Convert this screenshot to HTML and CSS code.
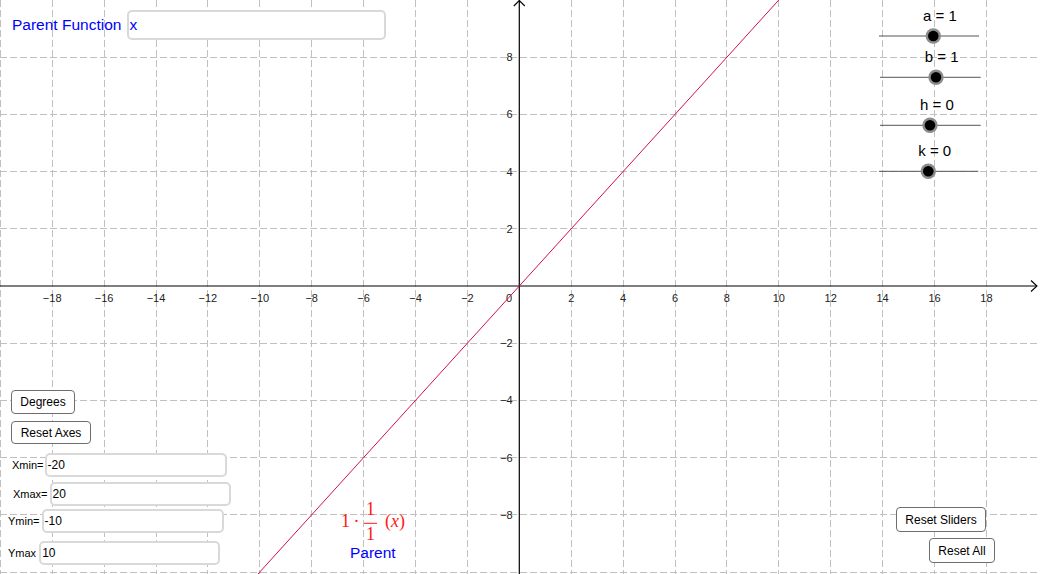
FILE: index.html
```html
<!DOCTYPE html>
<html>
<head>
<meta charset="utf-8">
<link rel="stylesheet" href="styles.css">
</head>
<body>
<div class="applet">
  <svg class="board" width="1040" height="574" viewBox="0 0 1040 574" xmlns="http://www.w3.org/2000/svg">
    <g class="grid">
      <line x1="52.2" y1="0" x2="52.2" y2="574"/>
      <line x1="104.1" y1="0" x2="104.1" y2="574"/>
      <line x1="156" y1="0" x2="156" y2="574"/>
      <line x1="207.9" y1="0" x2="207.9" y2="574"/>
      <line x1="259.8" y1="0" x2="259.8" y2="574"/>
      <line x1="311.7" y1="0" x2="311.7" y2="574"/>
      <line x1="363.6" y1="0" x2="363.6" y2="574"/>
      <line x1="415.5" y1="0" x2="415.5" y2="574"/>
      <line x1="467.4" y1="0" x2="467.4" y2="574"/>
      <line x1="571.2" y1="0" x2="571.2" y2="574"/>
      <line x1="623.1" y1="0" x2="623.1" y2="574"/>
      <line x1="675" y1="0" x2="675" y2="574"/>
      <line x1="726.9" y1="0" x2="726.9" y2="574"/>
      <line x1="778.8" y1="0" x2="778.8" y2="574"/>
      <line x1="830.7" y1="0" x2="830.7" y2="574"/>
      <line x1="882.6" y1="0" x2="882.6" y2="574"/>
      <line x1="934.5" y1="0" x2="934.5" y2="574"/>
      <line x1="986.4" y1="0" x2="986.4" y2="574"/>
      <line x1="0.5" y1="0" x2="0.5" y2="574"/>
      <line x1="0" y1="57.2" x2="1040" y2="57.2"/>
      <line x1="0" y1="114.4" x2="1040" y2="114.4"/>
      <line x1="0" y1="171.6" x2="1040" y2="171.6"/>
      <line x1="0" y1="228.8" x2="1040" y2="228.8"/>
      <line x1="0" y1="343.2" x2="1040" y2="343.2"/>
      <line x1="0" y1="400.4" x2="1040" y2="400.4"/>
      <line x1="0" y1="457.6" x2="1040" y2="457.6"/>
      <line x1="0" y1="514.8" x2="1040" y2="514.8"/>
      <line x1="0" y1="572" x2="1040" y2="572"/>
    </g>
    <g class="axes">
      <line x1="0" y1="286" x2="1037" y2="286"/>
      <polyline points="1031,280.5 1037,286 1031,291.5"/>
      <line x1="519.3" y1="574" x2="519.3" y2="0.5"/>
      <polyline points="513.8,6 519.3,0.5 524.8,6"/>
    </g>
    <g class="xticks">
      <text x="52.2" y="302.3">−18</text>
      <text x="104.1" y="302.3">−16</text>
      <text x="156" y="302.3">−14</text>
      <text x="207.9" y="302.3">−12</text>
      <text x="259.8" y="302.3">−10</text>
      <text x="311.7" y="302.3">−8</text>
      <text x="363.6" y="302.3">−6</text>
      <text x="415.5" y="302.3">−4</text>
      <text x="467.4" y="302.3">−2</text>
      <text x="509" y="302.3">0</text>
      <text x="571.2" y="302.3">2</text>
      <text x="623.1" y="302.3">4</text>
      <text x="675" y="302.3">6</text>
      <text x="726.9" y="302.3">8</text>
      <text x="778.8" y="302.3">10</text>
      <text x="830.7" y="302.3">12</text>
      <text x="882.6" y="302.3">14</text>
      <text x="934.5" y="302.3">16</text>
      <text x="986.4" y="302.3">18</text>
    </g>
    <g class="yticks">
      <text x="512.7" y="61.2">8</text>
      <text x="512.7" y="118.4">6</text>
      <text x="512.7" y="175.6">4</text>
      <text x="512.7" y="232.8">2</text>
      <text x="512.7" y="347.2">−2</text>
      <text x="512.7" y="404.4">−4</text>
      <text x="512.7" y="461.6">−6</text>
      <text x="512.7" y="518.8">−8</text>
    </g>
    <line class="graph" x1="233.85" y1="600.6" x2="804.75" y2="-28.6"/>

    <g class="slider">
      <text x="940" y="20.5">a = 1</text>
      <line x1="879" y1="36" x2="979" y2="36"/>
      <circle class="ring" cx="933.3" cy="36" r="7.7"/>
      <circle class="dot" cx="933.3" cy="36" r="5.3"/>
    </g>
    <g class="slider">
      <text x="941.7" y="61.5">b = 1</text>
      <line x1="880" y1="77.3" x2="980.7" y2="77.3"/>
      <circle class="ring" cx="936" cy="77.3" r="7.7"/>
      <circle class="dot" cx="936" cy="77.3" r="5.3"/>
    </g>
    <g class="slider">
      <text x="937" y="109.5">h = 0</text>
      <line x1="880" y1="125.3" x2="980.7" y2="125.3"/>
      <circle class="ring" cx="930" cy="125.3" r="7.7"/>
      <circle class="dot" cx="930" cy="125.3" r="5.3"/>
    </g>
    <g class="slider">
      <text x="934.7" y="156">k = 0</text>
      <line x1="879" y1="171.3" x2="978.3" y2="171.3"/>
      <circle class="ring" cx="928.3" cy="171.3" r="7.7"/>
      <circle class="dot" cx="928.3" cy="171.3" r="5.3"/>
    </g>

    <g class="formula">
      <text x="341" y="527.3">1</text>
      <text x="353.5" y="527.3">·</text>
      <text class="mid" x="370.5" y="515">1</text>
      <line x1="364" y1="523.3" x2="377" y2="523.3"/>
      <text class="mid" x="370.5" y="540">1</text>
      <text x="385" y="527.3">(<tspan class="it">x</tspan>)</text>
    </g>
  </svg>

  <div class="field top-field">
    <span class="flabel blue">Parent Function</span>
    <div class="box big"><span class="blue">x</span></div>
  </div>

  <div class="btn degrees">Degrees</div>
  <div class="btn reset-axes">Reset Axes</div>

  <div class="field xmin">
    <span class="flabel small">Xmin=</span>
    <div class="box"><span>-20</span></div>
  </div>
  <div class="field xmax">
    <span class="flabel small">Xmax=</span>
    <div class="box"><span>20</span></div>
  </div>
  <div class="field ymin">
    <span class="flabel small">Ymin=</span>
    <div class="box"><span>-10</span></div>
  </div>
  <div class="field ymax">
    <span class="flabel small">Ymax</span>
    <div class="box"><span>10</span></div>
  </div>

  <div class="caption">Parent</div>

  <div class="btn reset-sliders">Reset Sliders</div>
  <div class="btn reset-all">Reset All</div>
</div>
</body>
</html>
```

FILE: styles.css
```css
* { box-sizing: border-box; }
html, body {
  margin: 0;
  padding: 0;
  background: #fff;
}
body {
  font-family: "Liberation Sans", Arial, sans-serif;
  width: 1040px;
  height: 574px;
  overflow: hidden;
}
.applet {
  position: relative;
  width: 1040px;
  height: 574px;
  background: #fff;
}
.board {
  position: absolute;
  left: 0;
  top: 0;
  display: block;
}
.grid line {
  stroke: #c0c0c0;
  stroke-width: 1;
  stroke-dasharray: 7 3;
  shape-rendering: crispEdges;
}
.axes line {
  stroke: #000;
  stroke-width: 1.2;
}
.axes polyline {
  stroke: #000;
  stroke-width: 1.1;
  fill: none;
}
.xticks text, .yticks text {
  font-family: "Liberation Sans", Arial, sans-serif;
  font-size: 11px;
  fill: #222;
}
.xticks text { text-anchor: middle; }
.yticks text { text-anchor: end; }
.graph {
  stroke: #d4104a;
  stroke-width: 1;
}
.slider text {
  font-family: "Liberation Sans", Arial, sans-serif;
  font-size: 15px;
  text-anchor: middle;
  fill: #000;
}
.slider line {
  stroke: #555;
  stroke-width: 1;
}
.slider .ring { fill: #8c8c8c; }
.slider .dot { fill: #000; }
.formula text {
  font-family: "Liberation Serif", "Times New Roman", serif;
  font-size: 18px;
  fill: #ff1a1a;
}
.formula .mid { text-anchor: middle; }
.formula .it { font-style: italic; }
.formula line {
  stroke: #ff1a1a;
  stroke-width: 1;
}

.field {
  position: absolute;
  display: flex;
  align-items: center;
}
.flabel {
  color: #000;
  white-space: nowrap;
}
.flabel.small {
  font-size: 11px;
  margin-right: 1px;
}
.blue { color: #0000ff; }
.box {
  background: #fff;
  border: 2px solid #d9d9d9;
  border-radius: 5px;
  height: 24px;
  display: flex;
  align-items: center;
  padding-left: 1px;
  font-size: 12px;
  color: #000;
}
.top-field {
  left: 12px;
  top: 10px;
  gap: 6px;
}
.top-field .flabel {
  font-size: 15.5px;
}
.box.big {
  width: 259px;
  height: 30px;
  font-size: 15.5px;
  padding-left: 0;
}
.xmin { left: 12px; top: 453px; }
.xmin .box { width: 182px; }
.xmax { left: 13px; top: 482px; }
.xmax .box { width: 181px; margin-left: 1px; }
.ymin { left: 8px; top: 509px; }
.ymin .box { width: 182px; margin-left: 1px; }
.ymax { left: 8px; top: 541px; }
.ymax .box { width: 181px; margin-left: 2px; }

.btn {
  position: absolute;
  background: #fff;
  border: 1.5px solid #6e6e6e;
  border-radius: 4px;
  font-size: 12px;
  color: #000;
  display: flex;
  align-items: center;
  justify-content: center;
  white-space: nowrap;
}
.degrees { left: 11px; top: 390px; width: 64px; height: 24px; }
.reset-axes { left: 11px; top: 421px; width: 80px; height: 23px; }
.reset-sliders { left: 896px; top: 507px; width: 90px; height: 25px; }
.reset-all { left: 929px; top: 538px; width: 66px; height: 25px; }

.caption {
  position: absolute;
  left: 350px;
  top: 544px;
  font-size: 15.5px;
  color: #0000ff;
  line-height: 18px;
}
```
